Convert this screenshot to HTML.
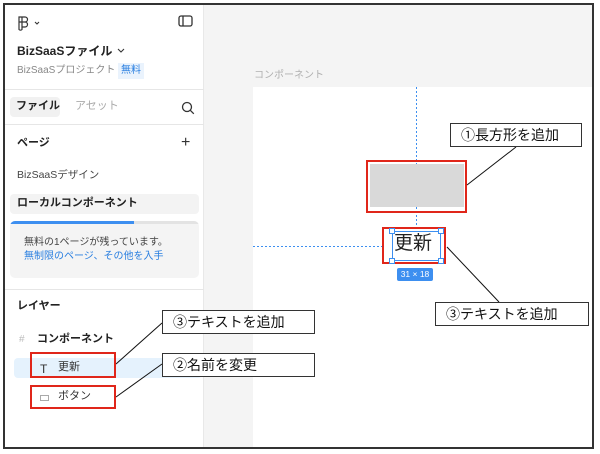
<!DOCTYPE html>
<html><head><meta charset="utf-8"><style>
*{margin:0;padding:0;box-sizing:border-box}
html,body{width:600px;height:454px;overflow:hidden}
body{background:#fff;position:relative;font-family:"Liberation Sans","Noto Sans CJK JP",sans-serif;color:#222}
.a{position:absolute}
.t{position:absolute;white-space:nowrap;line-height:1}
.call{position:absolute;border:1px solid #333;background:#fff;font-size:14px;line-height:22px;padding-left:10px;color:#111}
.red{position:absolute;border:2px solid #e0261a}
</style></head><body>
<div class="a" style="left:3px;top:3px;width:591px;height:446px;border:2px solid #333;overflow:hidden">
 <div class="a" style="left:199px;top:0;width:390px;height:442px;background:#f4f4f4"></div>
 <div class="a" style="left:248px;top:82px;width:341px;height:360px;background:#fff"></div>
 <div class="t" style="left:249px;top:66px;font-size:10px;color:#b0b0b0">コンポーネント</div>
 <div class="a" style="left:0;top:0;width:199px;height:442px;background:#fff;border-right:1px solid #e8e8e8"></div>
 <svg class="a" style="left:11px;top:10px" width="30" height="16" viewBox="0 0 30 16"><path d="M3 2h6a2.5 2.5 0 010 5 2.5 2.5 0 010 5H6v2.5A2 2 0 013 14.5zM6 2v10M3 7h6" fill="none" stroke="#333" stroke-width="1.2"/><path d="M19 7l2 2 2-2" fill="none" stroke="#333" stroke-width="1.1"/></svg>
 <svg class="a" style="left:173px;top:10px" width="16" height="13"><rect x="1" y="1" width="13" height="10" rx="2" fill="none" stroke="#333" stroke-width="1.3"/><path d="M5 1v10" stroke="#333" stroke-width="1.3"/></svg>
 <div class="t" style="left:12px;top:40px;font-size:12px;font-weight:bold">BizSaaSファイル</div>
 <svg class="a" style="left:112px;top:43px" width="8" height="6"><path d="M1 1l3 3 3-3" fill="none" stroke="#333" stroke-width="1.1"/></svg>
 <div class="t" style="left:12px;top:61px;font-size:10px;color:#888">BizSaaSプロジェクト</div>
 <div class="t" style="left:113px;top:58px;font-size:10px;color:#2a7fe0;background:#eaf3fd;padding:3px 3px">無料</div>
 <div class="a" style="left:0;top:84px;width:199px;height:1px;background:#e6e6e6"></div>
 <div class="a" style="left:5px;top:92px;width:50px;height:20px;background:#f1f1f1;border-radius:4px"></div>
 <div class="t" style="left:11px;top:96px;font-size:11px;font-weight:bold">ファイル</div>
 <div class="t" style="left:70px;top:96px;font-size:11px;color:#aaa">アセット</div>
 <svg class="a" style="left:176px;top:96px" width="14" height="14"><circle cx="6" cy="6" r="4.5" fill="none" stroke="#333" stroke-width="1.3"/><path d="M9.3 9.3l3.5 3.5" stroke="#333" stroke-width="1.3"/></svg>
 <div class="a" style="left:0;top:119px;width:199px;height:1px;background:#e6e6e6"></div>
 <div class="t" style="left:12px;top:133px;font-size:11px;font-weight:bold">ページ</div>
 <div class="t" style="left:176px;top:130px;font-size:16px;color:#333">+</div>
 <div class="t" style="left:12px;top:165px;font-size:10.5px;color:#444">BizSaaSデザイン</div>
 <div class="a" style="left:5px;top:189px;width:189px;height:20px;background:#f3f3f3;border-radius:4px"></div>
 <div class="t" style="left:12px;top:193px;font-size:11px;font-weight:bold">ローカルコンポーネント</div>
 <div class="a" style="left:5px;top:216px;width:189px;height:57px;background:#f4f4f4;border-radius:5px;overflow:hidden"><div style="height:3px;width:124px;background:#3d8ff0"></div><div class="a" style="left:124px;top:0;width:65px;height:3px;background:#e3e3e3"></div></div>
 <div class="t" style="left:19px;top:233px;font-size:10px;color:#444">無料の1ページが残っています。</div>
 <div class="t" style="left:19px;top:247px;font-size:10px;color:#2a7fe0">無制限のページ、その他を入手</div>
 <div class="a" style="left:0;top:284px;width:199px;height:1px;background:#e6e6e6"></div>
 <div class="t" style="left:12px;top:296px;font-size:11px;font-weight:bold">レイヤー</div>
 <div class="t" style="left:14px;top:330px;font-size:10px;color:#bbb">#</div>
 <div class="t" style="left:32px;top:329px;font-size:11px;font-weight:bold">コンポーネント</div>
 <div class="a" style="left:9px;top:353px;width:188px;height:20px;background:#e5f2fd;border-radius:4px"></div>
 <div class="t" style="left:35px;top:358px;font-size:12px;color:#333">T</div>
 <div class="t" style="left:53px;top:357px;font-size:11px;color:#333">更新</div>
 <div class="a" style="left:35px;top:390px;width:9px;height:6px;border:1px solid #aaa"></div>
 <div class="t" style="left:53px;top:386px;font-size:11px;color:#333">ボタン</div>
</div>
<svg class="a" style="left:0;top:0" width="600" height="454">
<g stroke="#3d8ff0" stroke-width="1" stroke-dasharray="2 2"><line x1="416.5" y1="87" x2="416.5" y2="228"/><line x1="253" y1="246.5" x2="384" y2="246.5"/></g>
</svg>
<div class="red" style="left:366px;top:160px;width:101px;height:53px"></div>
<div class="a" style="left:370px;top:164px;width:94px;height:43px;background:#d9d9d9"></div>
<div class="red" style="left:382px;top:227px;width:64px;height:37px"></div>
<div class="a" style="left:392px;top:231px;width:49px;height:30px;border:1px solid #3d8ff0"></div>
<div class="a" style="left:389px;top:228px;width:6px;height:6px;border:1px solid #3d8ff0;background:#fff"></div>
<div class="a" style="left:438px;top:228px;width:6px;height:6px;border:1px solid #3d8ff0;background:#fff"></div>
<div class="a" style="left:389px;top:258px;width:6px;height:6px;border:1px solid #3d8ff0;background:#fff"></div>
<div class="a" style="left:438px;top:258px;width:6px;height:6px;border:1px solid #3d8ff0;background:#fff"></div>
<div class="t" style="left:394px;top:234px;font-size:19px;color:#222">更新</div>
<div class="t" style="left:397px;top:268px;width:36px;height:13px;background:#3d8ff0;color:#fff;font-size:8.5px;line-height:13px;text-align:center;border-radius:2px">31 × 18</div>
<svg class="a" style="left:0;top:0" width="600" height="454"><g stroke="#111" stroke-width="1"><line x1="467" y1="185" x2="516" y2="147"/><line x1="447" y1="247" x2="499" y2="302"/><line x1="116" y1="364" x2="162" y2="323"/><line x1="116" y1="397" x2="162" y2="364"/></g></svg>
<div class="call" style="left:450px;top:123px;width:132px;height:24px">①長方形を追加</div>
<div class="call" style="left:435px;top:302px;width:154px;height:24px">③テキストを追加</div>
<div class="call" style="left:162px;top:310px;width:153px;height:24px">③テキストを追加</div>
<div class="call" style="left:162px;top:353px;width:153px;height:24px">②名前を変更</div>
<div class="red" style="left:30px;top:352px;width:86px;height:26px"></div>
<div class="red" style="left:30px;top:385px;width:86px;height:24px"></div>
</body></html>
